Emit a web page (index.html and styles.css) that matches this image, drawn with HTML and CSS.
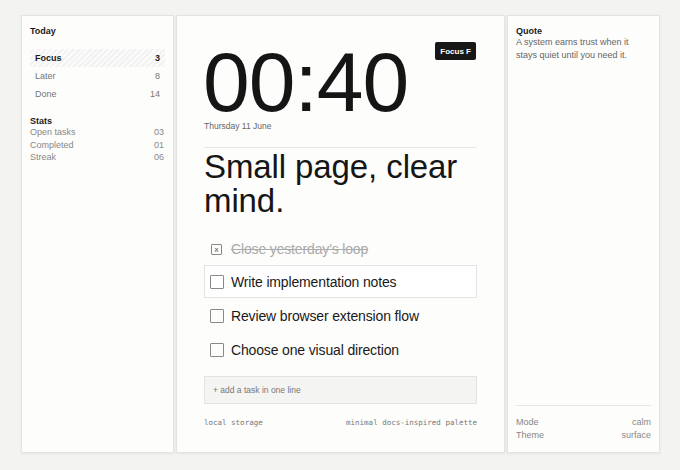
FILE: index.html
```html
<!DOCTYPE html>
<html lang="en">
<head>
    <meta charset="UTF-8">
    <meta name="viewport" content="width=device-width, initial-scale=1.0">
    <title>Today</title>
    <link rel="stylesheet" href="styles.css">
</head>
<body>
    <div class="layout">
        <aside class="panel side">
            <h2 class="side-title">Today</h2>
            <ul class="views">
                <li class="view active"><span>Focus</span><span>3</span></li>
                <li class="view"><span>Later</span><span>8</span></li>
                <li class="view"><span>Done</span><span>14</span></li>
            </ul>
            <h2 class="side-title stats-title">Stats</h2>
            <ul class="stats">
                <li><span>Open tasks</span><span>03</span></li>
                <li><span>Completed</span><span>01</span></li>
                <li><span>Streak</span><span>06</span></li>
            </ul>
        </aside>

        <main class="panel main">
            <div class="clock-row">
                <div class="clock">00:40</div>
                <button class="focus-btn">Focus F</button>
            </div>
            <div class="date">Thursday 11 June</div>
            <h1 class="headline">Small page, clear mind.</h1>

            <ul class="tasks">
                <li class="task done"><span class="box">x</span>Close yesterday's loop</li>
                <li class="task selected"><span class="box"></span>Write implementation notes</li>
                <li class="task"><span class="box"></span>Review browser extension flow</li>
                <li class="task"><span class="box"></span>Choose one visual direction</li>
            </ul>

            <div class="add-task">+ add a task in one line</div>
            <div class="footer">
                <span>local storage</span>
                <span>minimal docs-inspired palette</span>
            </div>
        </main>

        <aside class="panel side right">
            <h2 class="side-title">Quote</h2>
            <p class="quote">A system earns trust when it stays quiet until you need it.</p>
            <ul class="meta">
                <li><span>Mode</span><span>calm</span></li>
                <li><span>Theme</span><span>surface</span></li>
            </ul>
        </aside>
    </div>
</body>
</html>
```

FILE: styles.css
```css
body {
    margin: 0;
    padding: 15px 20px 17px 21px;
    background-color: #f3f3f1;
    font-family: 'Liberation Sans', Arial, sans-serif;
    color: #1a1a1a;
}
ul {
    list-style: none;
    margin: 0;
    padding: 0;
}
.layout {
    display: grid;
    grid-template-columns: 153px 1fr 153px;
    gap: 2px;
    height: 438px;
}
.panel {
    background-color: #fdfdfc;
    border: 1px solid #e3e3e1;
    box-shadow: 0 1px 3px rgba(0,0,0,0.06);
    box-sizing: border-box;
}

/* side columns */
.side {
    padding: 10px 8px 10px;
    display: flex;
    flex-direction: column;
    font-size: 9px;
}
.side-title {
    margin: 0;
    font-size: 9px;
    font-weight: bold;
    color: #1a1a1a;
}
.views {
    margin-top: 13px;
}
.view {
    display: flex;
    justify-content: space-between;
    padding: 4px 5px;
    height: 10px;
    line-height: 10px;
    color: #777;
}
.view.active {
    color: #1a1a1a;
    font-weight: bold;
    background: repeating-linear-gradient(-45deg, #f2f2f1 0 2px, #fbfbfb 2px 4px);
}
.stats-title {
    margin-top: 13px;
}
.stats li, .meta li {
    display: flex;
    justify-content: space-between;
    line-height: 12.5px;
    color: #888;
}
.stats li span:last-child {
    padding-right: 1px;
}

.right .quote {
    margin: 0;
    font-size: 9px;
    line-height: 13px;
    color: #666;
}
.meta {
    margin-top: auto;
    border-top: 1px solid #e6e6e4;
    padding-top: 10px;
    padding-bottom: 1px;
}

/* main column */
.main {
    padding: 27px 27px 0 27px;
}
.clock-row {
    display: flex;
    justify-content: space-between;
    align-items: flex-start;
}
.clock {
    font-size: 84px;
    line-height: 78px;
    letter-spacing: -1px;
    margin-left: -1px;
    color: #151515;
}
.focus-btn {
    margin-top: -1px;
    margin-right: 1px;
    background-color: #171717;
    color: #fff;
    border: none;
    border-radius: 2px;
    font-family: inherit;
    font-size: 8px;
    font-weight: bold;
    padding: 4.5px 5px;
}
.date {
    margin-top: 0;
    font-size: 8.5px;
    color: #666;
    padding-bottom: 16px;
    border-bottom: 1px solid #e6e6e4;
}
.headline {
    margin: 2px 0 0;
    font-size: 33px;
    line-height: 34px;
    font-weight: normal;
    letter-spacing: -0.1px;
    color: #151515;
}
.tasks {
    margin-top: 25px;
}
.task {
    display: flex;
    align-items: center;
    height: 31px;
    padding: 0 5px;
    margin-bottom: 1px;
    font-size: 14px;
    letter-spacing: -0.15px;
    color: #1a1a1a;
    border: 1px solid transparent;
}
.task.done {
    height: 22px;
    margin-top: -6px;
    margin-bottom: 4px;
    color: #aaa;
    text-decoration: line-through;
}
.task.selected {
    border-color: #e3e3e1;
    background-color: #fff;
}
.box {
    width: 12px;
    height: 12px;
    border: 1px solid #888;
    border-radius: 1px;
    margin-right: 7px;
    font-size: 7px;
    line-height: 12px;
    text-align: center;
    color: #444;
    flex-shrink: 0;
}
.done .box {
    width: 9px;
    height: 9px;
    line-height: 9px;
    margin: 0 9px 0 1px;
    text-decoration: none;
}
.add-task {
    margin-top: 10px;
    height: 26px;
    line-height: 26px;
    padding: 0 8px;
    background-color: #f4f4f2;
    border: 1px solid #e3e3e1;
    font-size: 8.5px;
    color: #777;
}
.footer {
    display: flex;
    justify-content: space-between;
    margin-top: 14px;
    font-family: 'DejaVu Sans Mono', monospace;
    font-size: 7.5px;
    color: #777;
}
```
